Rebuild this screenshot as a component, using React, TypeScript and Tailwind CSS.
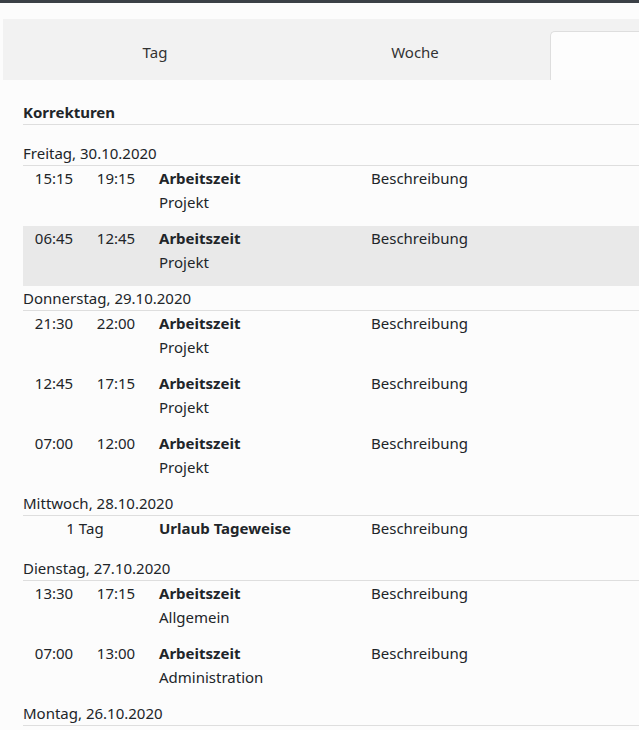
import React from "react";

type Entry = { from?: string; to?: string; span?: string; title: string; sub?: string; highlight?: boolean };
type Day = { label: string; entries: Entry[] };

const days: Day[] = [
  {
    label: "Freitag, 30.10.2020",
    entries: [
      { from: "15:15", to: "19:15", title: "Arbeitszeit", sub: "Projekt" },
      { from: "06:45", to: "12:45", title: "Arbeitszeit", sub: "Projekt", highlight: true },
    ],
  },
  {
    label: "Donnerstag, 29.10.2020",
    entries: [
      { from: "21:30", to: "22:00", title: "Arbeitszeit", sub: "Projekt" },
      { from: "12:45", to: "17:15", title: "Arbeitszeit", sub: "Projekt" },
      { from: "07:00", to: "12:00", title: "Arbeitszeit", sub: "Projekt" },
    ],
  },
  {
    label: "Mittwoch, 28.10.2020",
    entries: [{ span: "1 Tag", title: "Urlaub Tageweise" }],
  },
  {
    label: "Dienstag, 27.10.2020",
    entries: [
      { from: "13:30", to: "17:15", title: "Arbeitszeit", sub: "Allgemein" },
      { from: "07:00", to: "13:00", title: "Arbeitszeit", sub: "Administration" },
    ],
  },
  { label: "Montag, 26.10.2020", entries: [] },
];

function Row({ e }: { e: Entry }) {
  return (
    <div className={`flex ${e.sub ? "h-[60px]" : "h-[40px]"} ${e.highlight ? "bg-[#e9e9e9]" : ""}`}>
      {e.span ? (
        <div className="w-[124px] text-center">{e.span}</div>
      ) : (
        <>
          <div className="w-[62px] text-center">{e.from}</div>
          <div className="w-[62px] text-center">{e.to}</div>
        </>
      )}
      <div className="w-[212px] pl-3">
        <div className="font-bold">{e.title}</div>
        {e.sub && <div>{e.sub}</div>}
      </div>
      <div className="pl-3">Beschreibung</div>
    </div>
  );
}

export default function App() {
  return (
    <div
      className="min-h-[730px] bg-[#fcfcfc] text-[15px] leading-6 text-[#212529] overflow-hidden"
      style={{ fontFamily: '"Segoe UI", "Noto Sans", sans-serif' }}
    >
      <div className="h-[3px] bg-[#3b4046]" />
      <div className="pt-4 pl-[3px]">
        <div className="flex h-[61px] bg-[#f2f2f2] text-[#333]">
          <div className="w-[304px] flex items-center justify-center pt-[4px]">Tag</div>
          <div className="w-[243px] flex items-center justify-center pr-[27px] pt-[4px]">Woche</div>
          <div className="flex-1 flex flex-col justify-end">
            <div className="h-[49px] bg-[#fdfdfd] border-l border-t border-[#dedede] rounded-tl-[5px]" />
          </div>
        </div>
      </div>
      <div className="pl-[23px] pt-5">
        <div className="font-bold border-b border-[#dedede] h-[25px]">Korrekturen</div>
        <div className="pt-4">
          {days.map((d) => (
            <div key={d.label}>
              <div className="h-[25px] border-b border-[#dedede]">{d.label}</div>
              {d.entries.map((e, i) => (
                <Row key={i} e={e} />
              ))}
            </div>
          ))}
        </div>
      </div>
    </div>
  );
}
